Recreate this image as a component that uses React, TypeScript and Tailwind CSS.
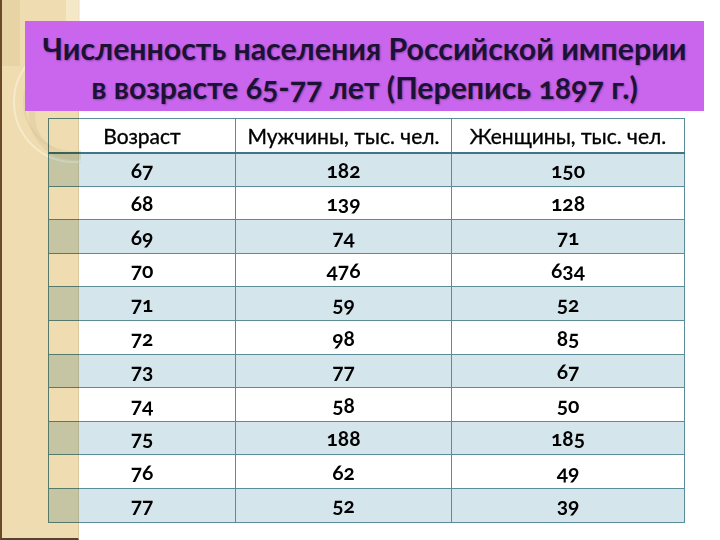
import React from "react";

const rows: [string, string, string][] = [
  ["67", "182", "150"],
  ["68", "139", "128"],
  ["69", "74", "71"],
  ["70", "476", "634"],
  ["71", "59", "52"],
  ["72", "98", "85"],
  ["73", "77", "67"],
  ["74", "58", "50"],
  ["75", "188", "185"],
  ["76", "62", "49"],
  ["77", "52", "39"],
];

function Strip() {
  return (
    <div className="absolute left-0 top-0 z-10 h-[540px] w-[79px] bg-[#efdcb0] mix-blend-multiply pointer-events-none border-l-2 border-[#6b4a2a] border-b-2 border-b-[#5a4030] border-r border-r-[#dcc89e]">
      <svg width="79" height="540" viewBox="0 0 79 540" className="block">
        <rect x="0" y="0" width="18" height="66" fill="#e2cd9c" opacity="0.6" />
        <rect x="64" y="0" width="14" height="22" fill="#f6ebcd" opacity="0.8" />
        <circle cx="72" cy="102" r="60" fill="none" stroke="#f8efd6" strokeWidth="2" opacity="0.7" />
        <circle cx="72" cy="102" r="50" fill="none" stroke="#dccb9f" strokeWidth="2" opacity="0.5" />
        <circle cx="72" cy="115" r="42" fill="none" stroke="#d2c093" strokeWidth="6" opacity="0.3" />
      </svg>
    </div>
  );
}

export default function App() {
  return (
    <div className="relative isolate h-[540px] w-[720px] overflow-hidden bg-white font-['Lato','Noto_Sans',sans-serif]">
      <Strip />
      <div className="flex flex-col pt-[21px]">
        <div className="relative z-20 ml-[25px] flex h-[90px] w-[679px] flex-col items-center justify-center bg-[#ca66ee] pt-[3px] text-[30.3px] font-bold leading-[39px] text-[#1b1236] [text-shadow:1px_1px_2px_rgba(40,0,60,0.35)]">
          <div>Численность населения Российской империи</div>
          <div className="oldstyle-nums">в возрасте 65-77 лет (Перепись 1897 г.)</div>
        </div>
        <table className="ml-[48px] mt-[7px] w-[636px] table-fixed border-collapse text-center text-black">
          <colgroup>
            <col className="w-[187px]" />
            <col className="w-[216px]" />
            <col className="w-[233px]" />
          </colgroup>
          <thead>
            <tr className="h-[34px] bg-white text-[21px] font-normal [-webkit-text-stroke:0.35px_black]">
              <th className="border border-[#5b8c99] border-b-2 border-b-[#3f7584] p-0 font-normal">Возраст</th>
              <th className="border border-[#5b8c99] border-b-2 border-b-[#3f7584] p-0 font-normal">Мужчины, тыс. чел.</th>
              <th className="border border-[#5b8c99] border-b-2 border-b-[#3f7584] p-0 font-normal">Женщины, тыс. чел.</th>
            </tr>
          </thead>
          <tbody className="text-[21px] font-bold oldstyle-nums">
            {rows.map((r, i) => (
              <tr key={r[0]} className={i % 2 === 0 ? "h-[33.6px] bg-[#d4e5ec]" : "h-[33.6px] bg-white"}>
                <td className="border border-[#5b8c99] p-0">{r[0]}</td>
                <td className="border border-[#5b8c99] p-0">{r[1]}</td>
                <td className="border border-[#5b8c99] p-0">{r[2]}</td>
              </tr>
            ))}
          </tbody>
        </table>
      </div>
    </div>
  );
}
